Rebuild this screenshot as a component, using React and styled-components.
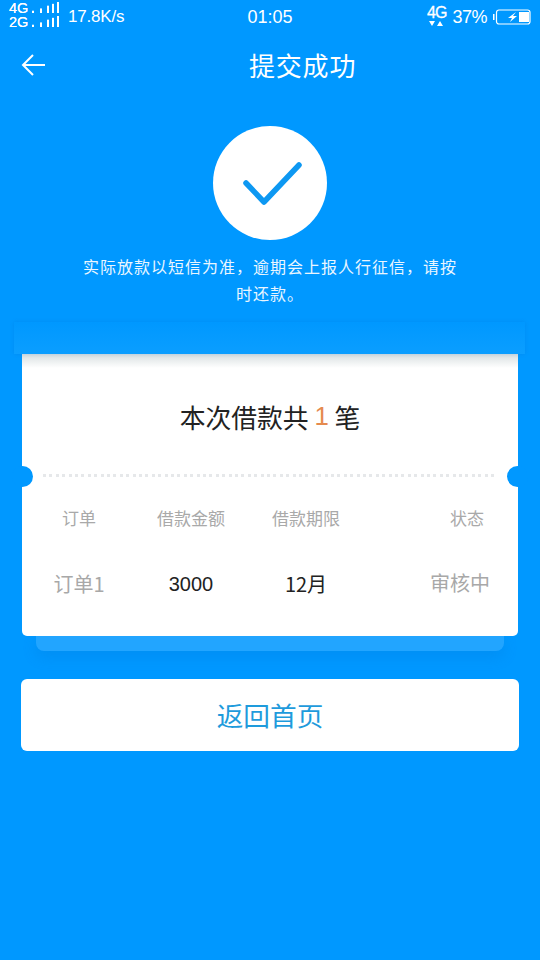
import React from "react";
import styled, { createGlobalStyle } from "styled-components";

const Global = createGlobalStyle`
  html, body { margin: 0; padding: 0; background: #0098ff; }
  * { box-sizing: border-box; }
`;
const CJK = `"Noto Sans CJK SC", "Liberation Sans", sans-serif`;
const LATIN = `"Liberation Sans", "Noto Sans CJK SC", sans-serif`;

const Page = styled.div`
  width: 540px; height: 960px; background: #0098ff; overflow: hidden;
  display: flex; flex-direction: column; font-family: ${CJK}; color: #fff;
`;
const StatusBar = styled.div`
  height: 34px; display: grid; grid-template-columns: 1fr 1fr 1fr; align-items: center;
  padding: 0 9px; font-family: ${LATIN};
`;
const StatusLeft = styled.div`display: flex; align-items: center; gap: 8px;`;
const StatusRight = styled.div`display: flex; align-items: center; justify-content: flex-end;`;
const Speed = styled.span`font-size: 17px; letter-spacing: -0.2px;`;
const Clock = styled.span`font-size: 18px; text-align: center;`;
const Percent = styled.span`font-size: 18px; letter-spacing: -0.5px; margin: 0 6px 0 4px;`;
const NetStack = styled.div`display: flex; gap: 2px; margin-top: -4px;`;
const NetLabels = styled.div`font-size: 14.5px; line-height: 14px; letter-spacing: -0.1px; width: 19px; text-shadow: 0 0 0.4px #fff;`;
const BarColumn = styled.div`display: flex; flex-direction: column; gap: 3px; padding-top: 1px;`;
const Bars = styled.svg`display: block;`;

const NavBar = styled.div`
  height: 62px; margin-bottom: 2px; display: flex; align-items: center; padding-left: 21px;
`;
const NavTitle = styled.div`
  font-size: 26px; line-height: 62px; margin-left: 203px; letter-spacing: 0.8px;
`;

const Hero = styled.div`display: flex; flex-direction: column; align-items: center; padding-top: 28px;`;
const CheckCircle = styled.div`
  width: 114px; height: 114px; border-radius: 50%; background: #fff;
  display: flex; align-items: center; justify-content: center;
`;
const Notice = styled.p`
  width: 380px; margin: 13px 0 15px; font-size: 16px; line-height: 27px; text-align: center;
  letter-spacing: 1px; color: #eaf6ff;
`;

const Receipt = styled.div`display: flex; flex-direction: column; align-items: center;`;
const Slot = styled.div`
  width: 511px; height: 32px; position: relative; z-index: 2; margin-left: -1px;
  background: linear-gradient(180deg, #0098ff 0%, #0b9eff 100%);
  box-shadow: 0 0 4px rgba(0, 100, 190, 0.22);
`;
const Card = styled.div`
  width: 496px; height: 282px; background: #fff; border-radius: 0 0 5px 5px; position: relative;
  color: #222; display: flex; flex-direction: column;
  &::before {
    content: ""; position: absolute; left: 0; right: 0; top: 0; height: 14px;
    background: linear-gradient(180deg, #d8dfe0 0%, #ffffff 100%);
  }
`;
const CardTitle = styled.div`
  height: 120px; padding-top: 4px; display: flex; align-items: center; justify-content: center;
  font-size: 25.8px; white-space: pre;
`;
const Accent = styled.span`color: #e58a4e; font-family: ${LATIN};`;
const Notch = styled.div`
  position: absolute; top: 112px; width: 21px; height: 21px; border-radius: 50%; background: #0098ff;
  ${(p) => (p.$side === "left" ? "left: -10px;" : "right: -10px;")}
`;
const Dots = styled.div`
  height: 3px; margin: 0 23px 0 21px;
  background: repeating-linear-gradient(90deg, #e6e8ea 0 3px, transparent 3px 6.4px);
`;
const TableRow = styled.div`
  display: grid; grid-template-columns: 114px 110px 120px 152px; align-items: center;
  height: ${(p) => p.$h}px;
`;
const Head = styled.div`
  font-size: 17px; color: #a9a9a9; text-align: center; padding-left: ${(p) => p.$shift || 0}px;
`;
const Cell = styled.div`
  font-size: 20px; text-align: center; color: ${(p) => (p.$muted ? "#a8a8a8" : "#222")};
  padding-left: ${(p) => p.$shift || 0}px; font-family: ${(p) => (p.$latin ? LATIN : CJK)};
  margin-top: ${(p) => p.$lift || 0}px;
`;
const Under = styled.div`
  width: 468px; height: 15px; background: #22a5ff; border-radius: 0 0 8px 8px;
  box-shadow: 0 6px 14px rgba(0, 110, 200, 0.22);
`;
const HomeButton = styled.button`
  display: block; width: 498px; height: 72px; margin: 28px auto 0 21px; border: 0; border-radius: 6px;
  background: #fff; color: #1e9bdc; font-family: ${CJK}; font-size: 26.7px; padding: 0 0 2px;
`;

const signal = (
  <Bars width="30" height="11" viewBox="0 0 30 12" preserveAspectRatio="none">
    <g fill="#fff">
      <rect x="2" y="9.5" width="2" height="2.5" />
      <rect x="10" y="7" width="2" height="5" />
      <rect x="17" y="4" width="2" height="8" />
      <rect x="22" y="2" width="2" height="10" />
      <rect x="27" y="0" width="2" height="12" />
    </g>
  </Bars>
);

export default function App() {
  return (
    <Page>
      <Global />
      <StatusBar>
        <StatusLeft>
          <NetStack>
            <NetLabels>4G<br />2G</NetLabels>
            <BarColumn>{signal}{signal}</BarColumn>
          </NetStack>
          <Speed>17.8K/s</Speed>
        </StatusLeft>
        <Clock>01:05</Clock>
        <StatusRight>
          <svg width="21" height="26" viewBox="0 0 21 26">
            <text x="0" y="14" fontFamily="Liberation Sans" fontSize="16" fill="#fff" stroke="#fff" strokeWidth="0.3" letterSpacing="-0.8">4G</text>
            <path d="M2 17h6l-3 5zM10 22h6l-3-5z" fill="#fff" />
          </svg>
          <Percent>37%</Percent>
          <svg width="38" height="16" viewBox="0 0 38 16">
            <rect x="0" y="5" width="1.5" height="6" fill="#fff" />
            <rect x="3.5" y="1" width="33.5" height="14" rx="2.5" fill="none" stroke="#fff" strokeWidth="1.2" />
            <rect x="26" y="3" width="10" height="10" fill="#fff" />
            <path d="M23 3 15 9h4l-2 4 7-6h-4z" fill="#fff" />
          </svg>
        </StatusRight>
      </StatusBar>
      <NavBar>
        <svg width="25" height="24" viewBox="0 0 25 24" fill="none" stroke="#fff" strokeWidth="2">
          <path d="M24 12H2M12 2 2 12l10 10" />
        </svg>
        <NavTitle>提交成功</NavTitle>
      </NavBar>
      <Hero>
        <CheckCircle>
          <svg width="114" height="114" viewBox="0 0 114 114" fill="none" stroke="#0d98f2" strokeWidth="5.5" strokeLinecap="round" strokeLinejoin="round">
            <path d="M33 57 51 76 86 39" />
          </svg>
        </CheckCircle>
        <Notice>实际放款以短信为准，逾期会上报人行征信，请按时还款。</Notice>
      </Hero>
      <Receipt>
        <Slot />
        <Card>
          <CardTitle>本次借款共 <Accent>1</Accent> 笔</CardTitle>
          <Notch $side="left" />
          <Notch $side="right" />
          <Dots />
          <TableRow $h={80}>
            <Head>订单</Head>
            <Head>借款金额</Head>
            <Head>借款期限</Head>
            <Head $shift={50}>状态</Head>
          </TableRow>
          <TableRow $h={52}>
            <Cell $muted>订单1</Cell>
            <Cell $latin $lift={2}>3000</Cell>
            <Cell>12月</Cell>
            <Cell $muted $shift={36} $lift={-2}>审核中</Cell>
          </TableRow>
        </Card>
        <Under />
      </Receipt>
      <HomeButton>返回首页</HomeButton>
    </Page>
  );
}
